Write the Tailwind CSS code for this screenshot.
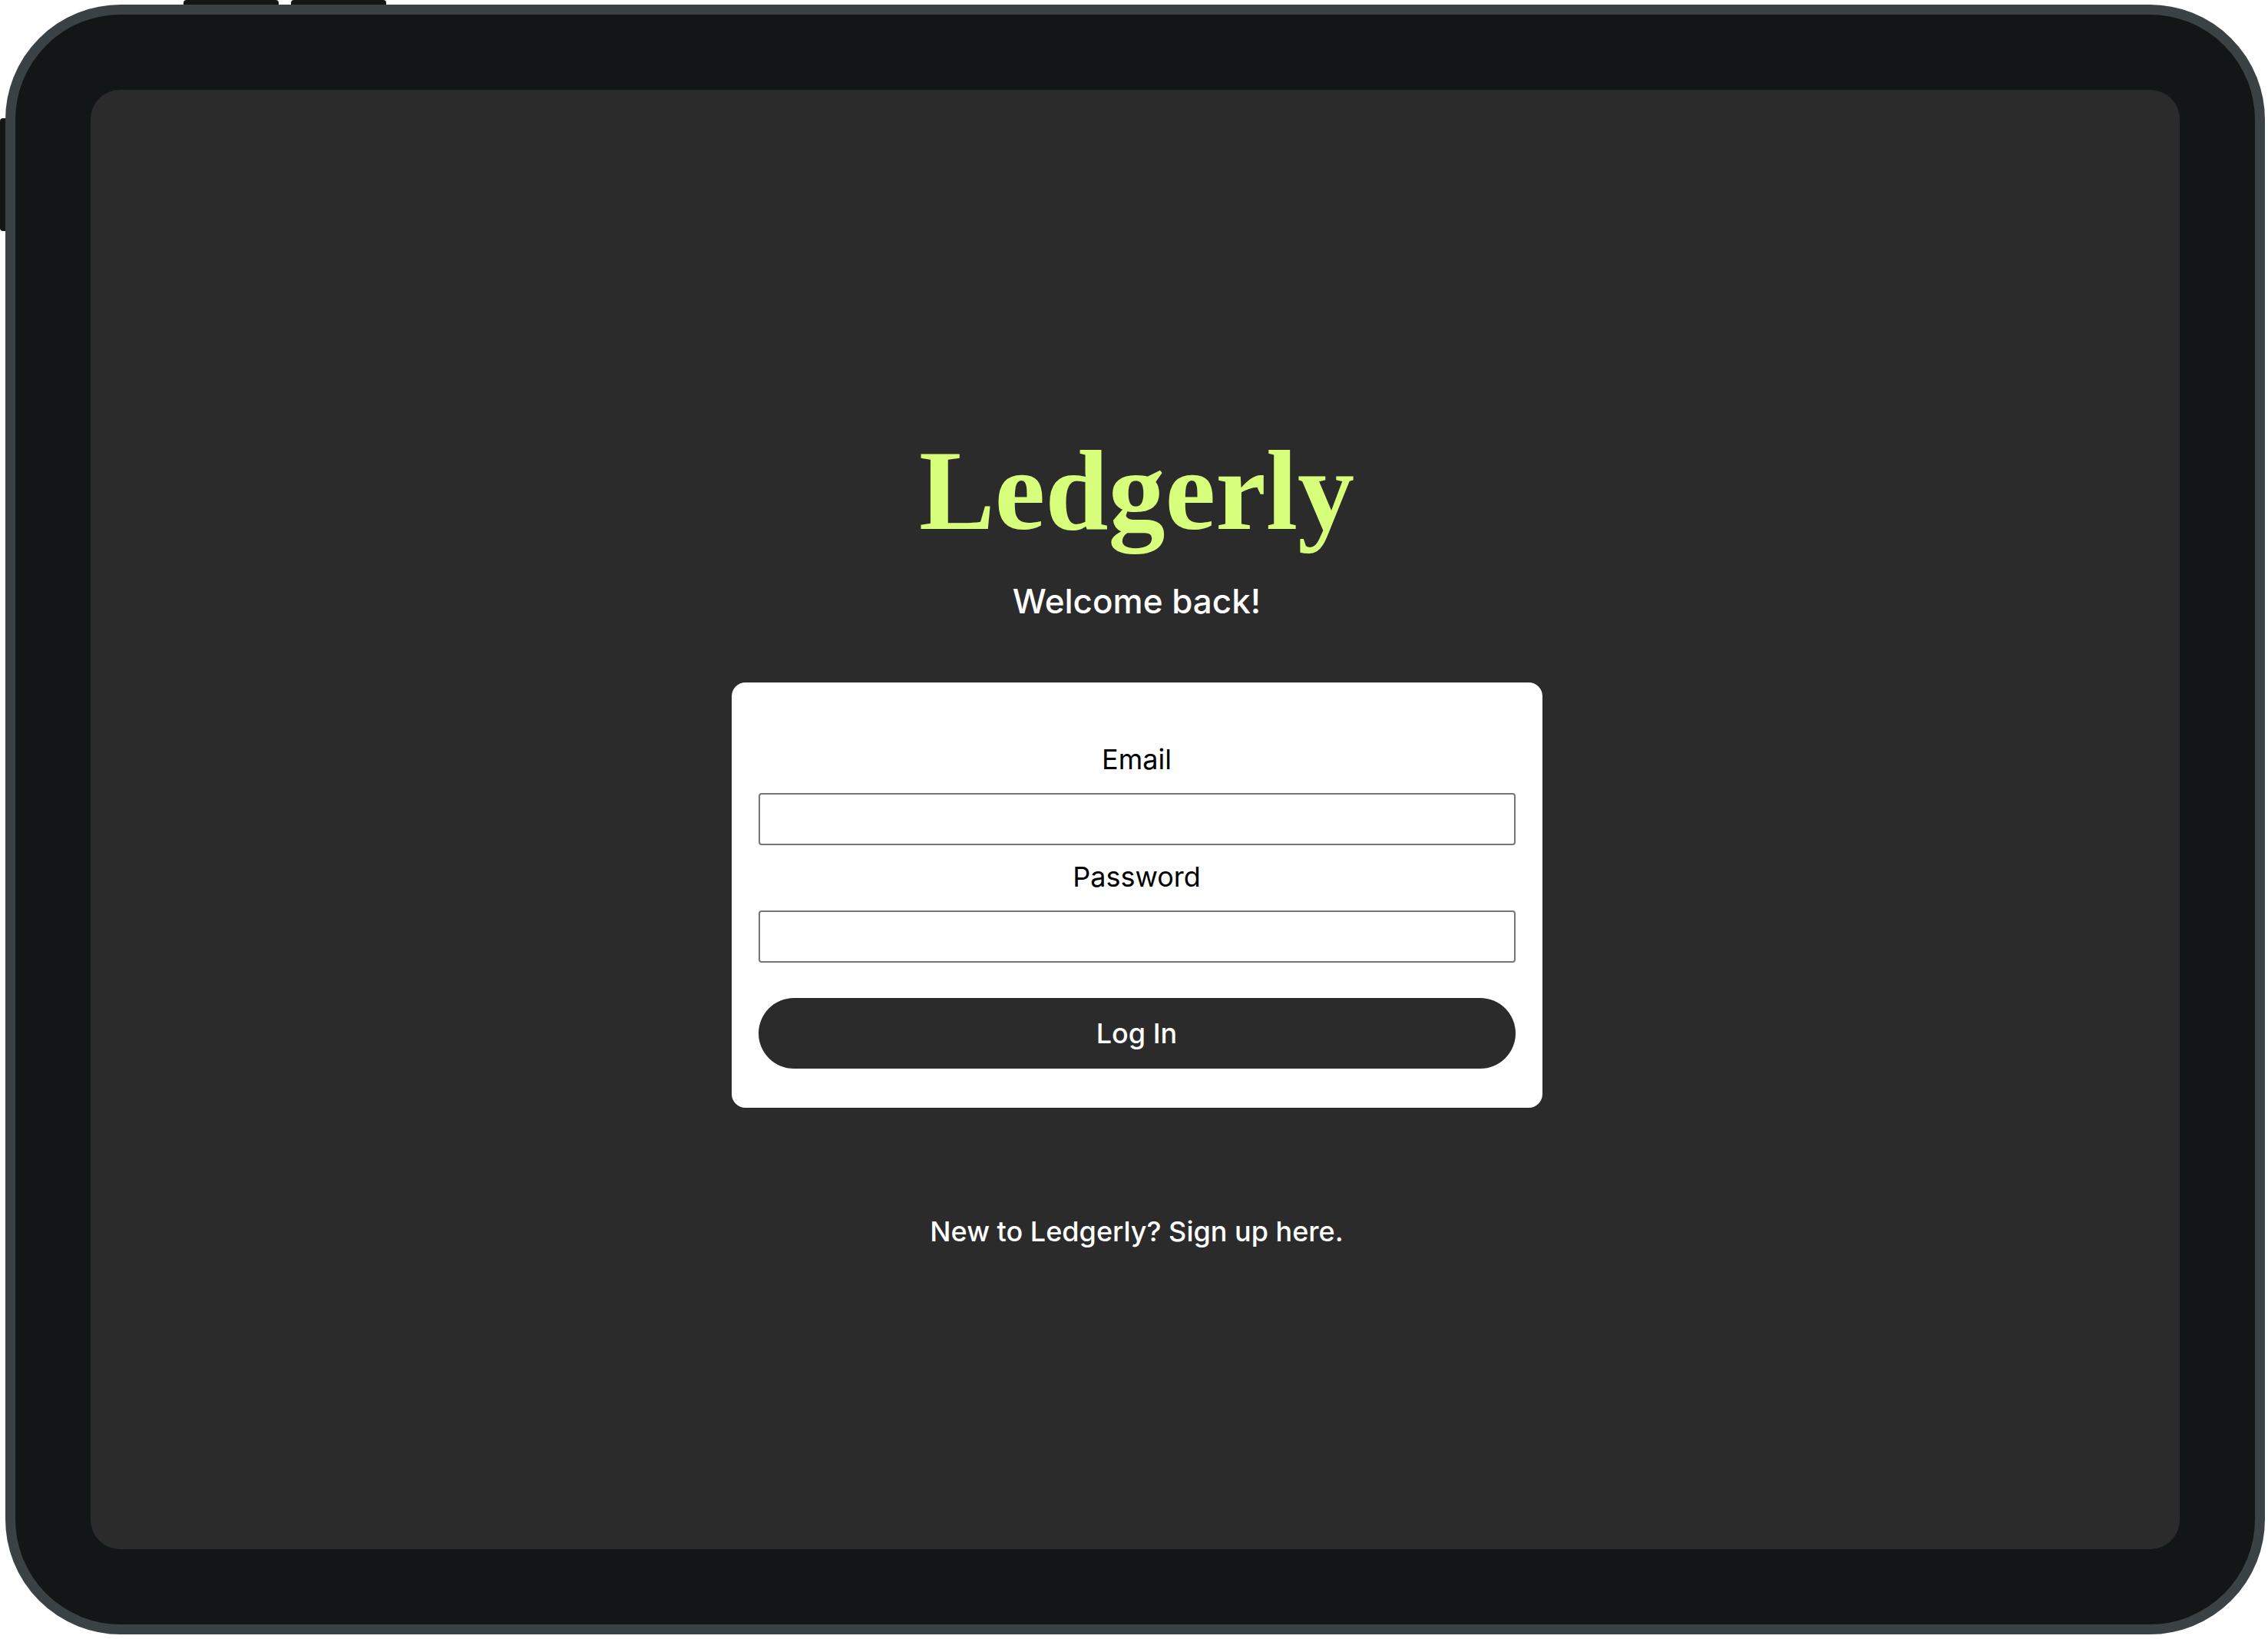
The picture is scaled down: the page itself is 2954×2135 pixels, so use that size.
<!DOCTYPE html>
<html lang="en">
<head>
<meta charset="utf-8">
<meta name="viewport" content="width=device-width, initial-scale=1">
<title>Ledgerly – Log in</title>
<script src="https://cdn.jsdelivr.net/npm/@tailwindcss/browser@4"></script>
</head>
<body class="relative flex min-h-screen flex-col bg-white pt-[6px] pr-[4px] pb-[6px] pl-[7px] font-['Inter',sans-serif]">
  <!-- Hardware buttons on the tablet's edge -->
  <div class="absolute top-0 left-[239px] flex gap-4" aria-hidden="true">
    <span class="h-2 w-[124px] rounded-t-[4px] bg-[#121616]"></span>
    <span class="h-2 w-[124px] rounded-t-[4px] bg-[#121616]"></span>
  </div>
  <span class="absolute top-[154px] left-0 h-[147px] w-2 rounded-l-[4px] bg-[#121616]" aria-hidden="true"></span>

  <!-- Tablet body -->
  <div class="relative flex flex-1 flex-col rounded-[150px] border-[13px] border-[#3b4245] bg-[#121616] p-[98px]">
    <main class="flex flex-1 flex-col items-center justify-center rounded-[38px] bg-[#2b2b2b] pt-[52px] pl-1 text-white">
      <h1 class="font-['Liberation_Serif',serif] text-[148px] leading-[160px] font-bold text-[#d7ff7b]">Ledgerly</h1>
      <p class="mt-9 text-[44px] leading-[56px] font-medium">Welcome back!</p>

      <form class="mt-[78px] flex w-full max-w-[1056px] flex-col rounded-[18px] bg-white px-[35px] pt-[76px] pb-[51px] text-center text-[36px] leading-[48px] text-black">
        <label for="email">Email</label>
        <input id="email" type="email" class="mt-5 h-[68px] rounded-[4px] border-2 border-[#767676] bg-white px-3">
        <label for="password" class="mt-[17px]">Password</label>
        <input id="password" type="password" class="mt-5 h-[68px] rounded-[4px] border-2 border-[#767676] bg-white px-3">
        <button type="submit" class="mt-[46px] h-[92px] rounded-full bg-[#2b2b2b] font-medium text-white">Log In</button>
      </form>

      <a href="#signup" class="mt-[137px] text-[36px] leading-[48px] font-medium">New to Ledgerly? Sign up here.</a>
    </main>
  </div>
</body>
</html>
